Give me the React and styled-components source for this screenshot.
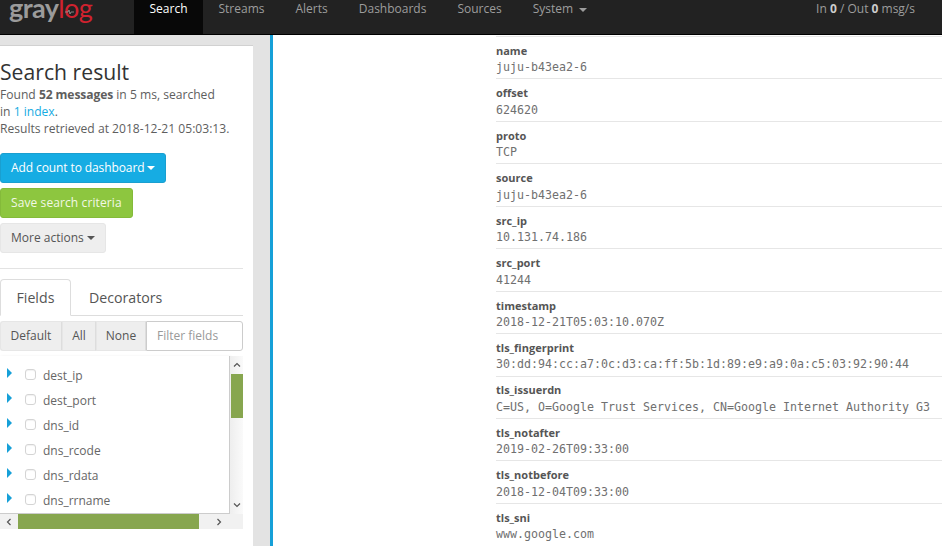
import React from "react";
import styled, { createGlobalStyle } from "styled-components";

const GlobalStyle = createGlobalStyle`
  html, body {
    margin: 0;
    height: 100%;
    overflow: hidden;
    background: #fff;
  }
  body {
    font-family: "Open Sans", "Liberation Sans", sans-serif;
    font-size: 12px;
    color: #555;
  }
`;

const Page = styled.div`
  width: 942px;
  height: 546px;
  display: flex;
  flex-direction: column;
  overflow: hidden;
`;

const Navbar = styled.div`
  height: 34px;
  flex: none;
  display: flex;
  background: #222;
  border-bottom: 1px solid #000;
  color: #9d9d9d;
  font-size: 12px;
`;

const Logo = styled.div`
  position: relative;
  width: 134px;
  flex: none;
  box-sizing: border-box;
  padding: 0 0 0 9px;
  font-family: "Lato", sans-serif;
  font-size: 27px;
  line-height: 16px;
  letter-spacing: -0.6px;
  white-space: nowrap;
`;

const LogoGray = styled.span`
  color: #9b9b9b;
  font-weight: 700;
`;

const LogoRed = styled.span`
  color: #d0222f;
  font-weight: 400;
`;

const LogoWave = styled.svg`
  position: absolute;
  left: 65px;
  top: 9px;
`;

const NavItem = styled.div`
  padding: 1px 15.5px 0;
  line-height: 16px;
  height: 33px;
  color: ${(p) => (p.$active ? "#fff" : "#9d9d9d")};
  background: ${(p) => (p.$active ? "#080808" : "transparent")};
`;

const NavItems = styled.div`
  display: flex;
  flex: 1;
`;

const Throughput = styled.div`
  padding: 1px 27px 0 0;
  line-height: 16px;
  b {
    color: #ccc;
  }
`;

const Caret = styled.span`
  display: inline-block;
  width: 0;
  height: 0;
  margin-left: 3px;
  vertical-align: middle;
  border-top: 4px solid currentColor;
  border-left: 4px solid transparent;
  border-right: 4px solid transparent;
`;

const Main = styled.div`
  flex: 1;
  display: flex;
  min-height: 0;
`;

const Sidebar = styled.div`
  width: 270px;
  flex: none;
  box-sizing: border-box;
  padding-top: 10px;
  background: #e3e3e3;
`;

const Card = styled.div`
  width: 253px;
  height: 520px;
  box-sizing: border-box;
  padding-top: 14px;
  background: #fff;
  border-top: 1px solid #d1d1d1;
`;

const Title = styled.h2`
  margin: 0;
  font-size: 21.2px;
  line-height: 23px;
  font-weight: 400;
  color: #333;
`;

const Summary = styled.div`
  margin-top: 3px;
  font-size: 12.1px;
  line-height: 17px;
  color: #5e5e5e;
  b {
    font-weight: 700;
    letter-spacing: -0.1px;
  }
  a {
    color: #16ace3;
  }
`;

const Actions = styled.div`
  margin-top: 16px;
  width: 243px;
  padding-bottom: 15px;
  display: flex;
  flex-direction: column;
  align-items: flex-start;
  gap: 5px;
  border-bottom: 1px solid #e3e3e3;
`;

const Button = styled.div`
  height: 30px;
  box-sizing: border-box;
  padding: 0 10px 1px;
  display: flex;
  align-items: center;
  border-radius: 3px;
  border: 1px solid ${(p) => p.$border};
  background: ${(p) => p.$bg};
  color: ${(p) => p.$fg};
  font-size: 12px;
  letter-spacing: ${(p) => p.$spacing || 0}px;
`;

const Tabs = styled.div`
  margin-top: 10px;
  width: 243px;
  height: 37px;
  box-sizing: border-box;
  display: flex;
  border-bottom: 1px solid #ddd;
  font-size: 14.2px;
`;

const Tab = styled.div`
  height: 37px;
  box-sizing: border-box;
  padding: 0 ${(p) => (p.$active ? "15.5px" : "17px")} 1px;
  display: flex;
  align-items: center;
  color: #555;
  background: ${(p) => (p.$active ? "#fff" : "transparent")};
  border: 1px solid ${(p) => (p.$active ? "#ddd" : "transparent")};
  border-bottom-color: ${(p) => (p.$active ? "#fff" : "transparent")};
  border-radius: 4px 4px 0 0;
`;

const FilterRow = styled.div`
  margin-top: 5px;
  width: 243px;
  height: 30px;
  display: flex;
`;

const FilterButton = styled.div`
  box-sizing: border-box;
  width: ${(p) => p.$width}px;
  padding-bottom: 1px;
  display: flex;
  align-items: center;
  justify-content: center;
  background: #eee;
  border: 1px solid #e6e6e6;
  border-right-color: #ddd;
  border-radius: ${(p) => (p.$first ? "3px 0 0 3px" : "0")};
  font-size: 12px;
`;

const FilterInput = styled.div`
  flex: 1;
  box-sizing: border-box;
  padding: 0 0 1px 10px;
  display: flex;
  align-items: center;
  border: 1px solid #ccc;
  border-radius: 0 3px 3px 0;
  color: #999;
  font-size: 12px;
`;

const ScrollFrame = styled.div`
  margin-top: 5px;
  width: 243px;
  display: grid;
  grid-template-columns: 230px 13px;
  grid-template-rows: 158px 15px;
`;

const FieldList = styled.div`
  box-sizing: border-box;
  border-right: 1px solid #ccc;
  border-bottom: 1px solid #ccc;
  padding-top: 9px;
  overflow: hidden;
  background: #fff;
  box-shadow: 1px 1px 3px rgba(0, 0, 0, 0.12);
`;

const FieldRow = styled.div`
  height: 25px;
  display: flex;
  align-items: flex-start;
  color: #666;
  font-size: 12px;
`;

const Arrow = styled.span`
  width: 0;
  height: 0;
  margin: 3px 13px 0 7px;
  flex: none;
  border-left: 5px solid #16a0d8;
  border-top: 5px solid transparent;
  border-bottom: 5px solid transparent;
`;

const Check = styled.span`
  width: 9px;
  height: 9px;
  margin: 4px 7px 0 0;
  flex: none;
  border: 1px solid #d4d4d4;
  border-radius: 3px;
  box-shadow: inset 0 1px 1px rgba(0, 0, 0, 0.06);
`;

const FieldName = styled.span`
  line-height: 20px;
  margin-top: 1px;
`;

const VTrack = styled.div`
  display: flex;
  flex-direction: column;
  background: linear-gradient(90deg, #eee, #fafafa);
`;

const HTrack = styled.div`
  display: flex;
  align-items: stretch;
  background: #f1f1f1;
`;

const ScrollArrow = styled.div`
  height: ${(p) => p.$size || 18}px;
  width: ${(p) => p.$width || "auto"};
  flex: none;
  display: flex;
  align-items: center;
  justify-content: center;
`;

const VThumb = styled.div`
  height: 44px;
  margin-left: 1px;
  background: #87a64f;
`;

const HThumb = styled.div`
  width: 181px;
  background: #87a64f;
`;

const Spacer = styled.div`
  flex: 1;
`;

const Divider = styled.div`
  width: 3px;
  flex: none;
  background: #16a0d8;
`;

const Content = styled.div`
  flex: 1;
  min-width: 0;
  padding: 1px 0 0 223px;
  overflow: hidden;
`;

const FieldBlock = styled.div`
  height: 40.55px;
  padding-top: 0.9px;
  border-top: 1px solid #e6e6e6;
`;

const Name = styled.div`
  margin-top: 5px;
  font-size: 11px;
  line-height: 15px;
  font-weight: 700;
  color: #555;
`;

const Value = styled.div`
  margin-top: 2.5px;
  font-family: "DejaVu Sans Mono", monospace;
  font-size: 11.63px;
  line-height: 15px;
  color: #707070;
  white-space: nowrap;
`;

const fields = ["dest_ip", "dest_port", "dns_id", "dns_rcode", "dns_rdata", "dns_rrname"];

const rows = [
  ["name", "juju-b43ea2-6"],
  ["offset", "624620"],
  ["proto", "TCP"],
  ["source", "juju-b43ea2-6"],
  ["src_ip", "10.131.74.186"],
  ["src_port", "41244"],
  ["timestamp", "2018-12-21T05:03:10.070Z"],
  ["tls_fingerprint", "30:dd:94:cc:a7:0c:d3:ca:ff:5b:1d:89:e9:a9:0a:c5:03:92:90:44"],
  ["tls_issuerdn", "C=US, O=Google Trust Services, CN=Google Internet Authority G3"],
  ["tls_notafter", "2019-02-26T09:33:00"],
  ["tls_notbefore", "2018-12-04T09:33:00"],
  ["tls_sni", "www.google.com"],
];

const Chevron = ({ d }) => (
  <svg width="8" height="8" viewBox="0 0 8 8" fill="none" stroke="#555" strokeWidth="1.2">
    <path d={d} />
  </svg>
);

export default function App() {
  return (
    <Page>
      <GlobalStyle />
      <Navbar>
        <Logo>
          <LogoGray>gray</LogoGray>
          <LogoRed>log</LogoRed>
          <LogoWave width="9" height="6" viewBox="0 0 9 6" fill="none" stroke="#9b9b9b" strokeWidth="0.8">
            <path d="M0 3H3L4 1L5 5L6 3H9" />
          </LogoWave>
        </Logo>
        <NavItems>
          <NavItem $active>Search</NavItem>
          <NavItem>Streams</NavItem>
          <NavItem>Alerts</NavItem>
          <NavItem>Dashboards</NavItem>
          <NavItem>Sources</NavItem>
          <NavItem>
            System <Caret />
          </NavItem>
        </NavItems>
        <Throughput>
          In <b>0</b> / Out <b>0</b> msg/s
        </Throughput>
      </Navbar>
      <Main>
        <Sidebar>
          <Card>
            <Title>Search result</Title>
            <Summary>
              Found <b>52 messages</b> in 5 ms, searched
              <br />
              in <a>1 index</a>.
              <br />
              Results retrieved at 2018-12-21 05:03:13.
            </Summary>
            <Actions>
              <Button $bg="#16ace3" $border="#1a9fd0" $fg="#fff" $spacing={-0.1}>
                Add count to dashboard
                <Caret />
              </Button>
              <Button $bg="#8dc63f" $border="#84ba3a" $fg="#f2f8e6" $spacing={0.1}>
                Save search criteria
              </Button>
              <Button $bg="#eee" $border="#e6e6e6" $fg="#555">
                More actions
                <Caret />
              </Button>
            </Actions>
            <Tabs>
              <Tab $active>Fields</Tab>
              <Tab>Decorators</Tab>
            </Tabs>
            <FilterRow>
              <FilterButton $first $width={62}>Default</FilterButton>
              <FilterButton $width={34}>All</FilterButton>
              <FilterButton $width={50}>None</FilterButton>
              <FilterInput>Filter fields</FilterInput>
            </FilterRow>
            <ScrollFrame>
              <FieldList>
                {fields.map((f) => (
                  <FieldRow key={f}>
                    <Arrow />
                    <Check />
                    <FieldName>{f}</FieldName>
                  </FieldRow>
                ))}
              </FieldList>
              <VTrack>
                <ScrollArrow $size={18}>
                  <Chevron d="M1 5.5L4 2.5L7 5.5" />
                </ScrollArrow>
                <VThumb />
                <Spacer />
                <ScrollArrow $size={18}>
                  <Chevron d="M1 2.5L4 5.5L7 2.5" />
                </ScrollArrow>
              </VTrack>
              <HTrack>
                <ScrollArrow $size={15} $width="18px">
                  <Chevron d="M5.5 1L2.5 4L5.5 7" />
                </ScrollArrow>
                <HThumb />
                <Spacer />
                <ScrollArrow $size={15} $width="22px">
                  <Chevron d="M2.5 1L5.5 4L2.5 7" />
                </ScrollArrow>
              </HTrack>
              <HTrack />
            </ScrollFrame>
          </Card>
        </Sidebar>
        <Divider />
        <Content>
          {rows.map(([name, value]) => (
            <FieldBlock key={name}>
              <Name>{name}</Name>
              <Value>{value}</Value>
            </FieldBlock>
          ))}
        </Content>
      </Main>
    </Page>
  );
}
